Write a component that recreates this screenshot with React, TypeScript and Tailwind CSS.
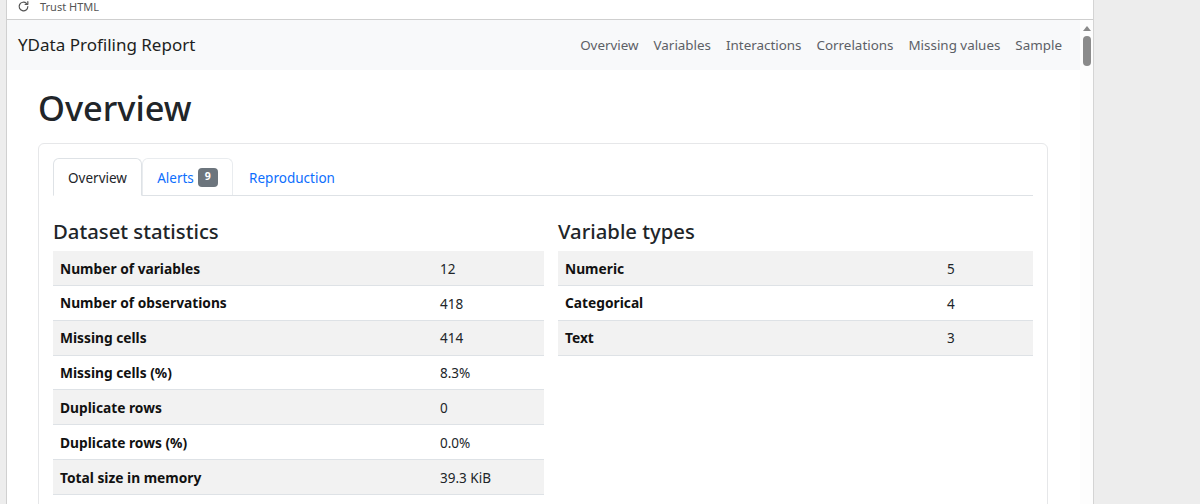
const navLinks = ["Overview", "Variables", "Interactions", "Correlations", "Missing values", "Sample"];

const datasetStats = [
  ["Number of variables", "12"],
  ["Number of observations", "418"],
  ["Missing cells", "414"],
  ["Missing cells (%)", "8.3%"],
  ["Duplicate rows", "0"],
  ["Duplicate rows (%)", "0.0%"],
  ["Total size in memory", "39.3 KiB"],
];

const variableTypes = [
  ["Numeric", "5"],
  ["Categorical", "4"],
  ["Text", "3"],
];

function StatTable({ title, rows, labelWidth }: { title: string; rows: string[][]; labelWidth: string }) {
  return (
    <div className="flex min-w-0 flex-col">
      <h2 className="h-[39px] pt-[4px] text-[20.3px] leading-[30px] font-medium text-[#212529]">{title}</h2>
      <div className="flex flex-col">
        {rows.map(([label, value], i) => (
          <div
            key={label}
            className={`flex h-[34.85px] items-center border-b border-[#dee2e6] pt-[2px] ${i % 2 === 0 ? "bg-[#f2f2f2]" : "bg-white"}`}
          >
            <div className={`${labelWidth} shrink-0 pl-[7px] text-[13.75px] font-bold text-[#111]`}>{label}</div>
            <div className="text-[13.5px] text-[#212529]">{value}</div>
          </div>
        ))}
      </div>
    </div>
  );
}

export default function App() {
  return (
    <div className="flex h-[504px] w-[1200px] overflow-hidden bg-[#ededed] font-['Noto_Sans',sans-serif]">
      <div className="w-[7px] shrink-0 border-r border-[#d0d0d0]" />
      <div className="flex w-[1087px] shrink-0 flex-col border-r border-[#d4d4d4] bg-white">
        <div className="flex h-5 shrink-0 items-center gap-[10px] border-b border-[#cfcfcf] pb-[7px] pl-[10px] text-[11px] leading-[13px] text-[#555]">
          <svg width="13" height="13" viewBox="0 0 24 24" fill="none" stroke="#555" strokeWidth="2.2" strokeLinecap="round" strokeLinejoin="round">
            <path d="M20 12a8 8 0 1 1-2.5-5.8" />
            <path d="M20 3v5h-5" />
          </svg>
          <span>Trust HTML</span>
        </div>
        <div className="flex min-h-0 flex-1">
          <div className="min-w-0 flex-1">
            <nav className="flex h-[50px] items-center justify-between bg-[#f8f9fa] pr-[18px] pl-[11px]">
              <span className="text-[17px] text-[#1d1f21]">YData Profiling Report</span>
              <div className="flex gap-[15px] text-[13.4px] text-[#5c6066]">
                {navLinks.map((link) => (
                  <span key={link}>{link}</span>
                ))}
              </div>
            </nav>
            <div className="pr-[32px] pl-[31px]">
              <h1 className="h-[73px] pt-[14px] text-[34.4px] leading-[48px] font-medium text-[#212529]">Overview</h1>
              <div className="h-[400px] rounded-t-[6px] border border-[#e6e7e9] px-[14px] pt-[14px]">
                <div className="flex h-[38px] border-b border-[#dee2e6] text-[13.5px]">
                  <div className="flex h-[38px] w-[89px] items-center justify-center rounded-t-[6px] border border-[#dee2e6] border-b-white bg-white pt-[2px] text-[#212529]">
                    Overview
                  </div>
                  <div className="flex h-[37px] w-[91px] items-center justify-center gap-[4px] rounded-t-[6px] border border-b-0 border-[#e9ecef] text-[#0d6efd]">
                    <span className="pt-[2px]">Alerts</span>
                    <span className="flex h-[19px] w-[20px] items-center justify-center rounded-[4px] bg-[#6c757d] text-[10.5px] font-bold text-white">9</span>
                  </div>
                  <div className="flex h-[37px] w-[118px] items-center justify-center pt-[4px] text-[#0d6efd]">Reproduction</div>
                </div>
                <div className="grid grid-cols-[491px_475px] gap-x-[14px] pt-[16px]">
                  <StatTable title="Dataset statistics" rows={datasetStats} labelWidth="w-[387px]" />
                  <StatTable title="Variable types" rows={variableTypes} labelWidth="w-[389px]" />
                </div>
              </div>
            </div>
          </div>
          <div className="relative w-[13px] shrink-0 bg-[#fdfdfd]">
            <div className="absolute top-[6px] left-[3px] h-0 w-0 border-x-[4px] border-b-[5px] border-x-transparent border-b-[#8a8a8a]" />
            <div className="absolute top-[16px] left-[3px] h-[30px] w-[8px] rounded-[4px] bg-[#8b8b8b]" />
          </div>
        </div>
      </div>
    </div>
  );
}
